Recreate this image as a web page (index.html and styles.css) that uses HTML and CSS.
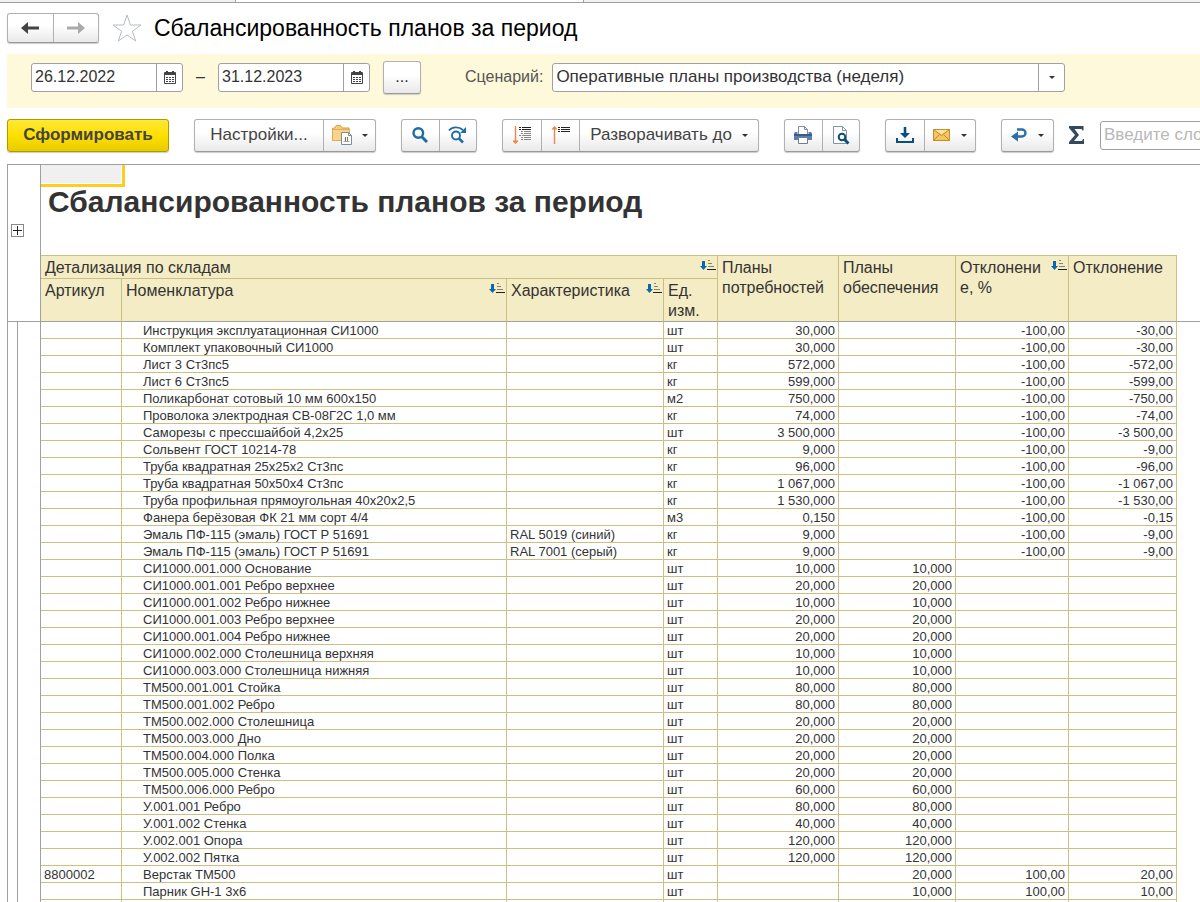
FILE: index.html
```html
<!DOCTYPE html>
<html lang="ru">
<head>
<meta charset="utf-8">
<title>Сбалансированность планов за период</title>
<link rel="stylesheet" href="styles.css">
</head>
<body>
<svg width="0" height="0" class="defs" aria-hidden="true">
  <symbol id="sort" viewBox="0 0 16 12">
    <path d="M2 1h3v5h2L3.500 10 0 6h2z" fill="#0d67b0"/>
    <path d="M8 .5h2M8 3.500h4M8 6.500h6" stroke="#888275"/>
    <path d="M7 9.500h9" stroke="#222"/>
  </symbol>
  <symbol id="cal" viewBox="0 0 12 13">
    <path d="M1 1h10a1 1 0 0 1 1 1v10a1 1 0 0 1-1 1H1a1 1 0 0 1-1-1V2a1 1 0 0 1 1-1z" fill="#444"/>
    <path d="M2 0h2v3H2zM8 0h2v3H8z" fill="#444"/>
    <path d="M1 4h10v8H1z" fill="#fff"/>
    <path d="M2 6h2v1H2zm3 0h2v1H5zm3 0h2v1H8zM2 8h2v1H2zm3 0h2v1H5zm3 0h2v1H8zM2 10h2v1H2zm3 0h2v1H5zm3 0h2v1H8z" fill="#444"/>
  </symbol>
</svg>
<div class="app">
  <div class="tabs"><span class="tab first"></span><span class="tab active"></span><span class="tab rest"></span></div>
  <header class="title-bar">
    <div class="group nav">
      <button class="btn" aria-label="Назад"><svg width="18" height="12" viewBox="0 0 18 12"><path d="M7 0v4.500h11v3H7V12L0 6z" fill="#444"/></svg></button>
      <button class="btn" aria-label="Вперёд"><svg width="18" height="12" viewBox="0 0 18 12"><path d="M11 0v4.500H0v3h11V12l7-6z" fill="#aaa"/></svg></button>
    </div>
    <button class="star" aria-label="В избранное"><svg width="30" height="28" viewBox="0 0 30 28"><path d="M15 1l3.400 10H29l-8.600 6.300L23.700 27 15 21 6.300 27l3.300-9.700L1 11h10.600z" fill="#fff" stroke="#b5bcc5"/></svg></button>
    <h1>Сбалансированность планов за период</h1>
  </header>

  <section class="filters">
    <div class="field date"><input type="text" value="26.12.2022" aria-label="Начало периода"><button aria-label="Выбрать дату начала"><svg width="12" height="13"><use href="#cal"/></svg></button></div>
    <span class="dash">–</span>
    <div class="field date"><input type="text" value="31.12.2023" aria-label="Конец периода"><button aria-label="Выбрать дату конца"><svg width="12" height="13"><use href="#cal"/></svg></button></div>
    <button class="solo more">...</button>
    <label for="scenario">Сценарий:</label>
    <div class="field scenario">
      <select id="scenario"><option>Оперативные планы производства (неделя)</option></select>
      <span class="drop"><i class="caret"></i></span>
    </div>
  </section>

  <div class="toolbar">
    <button class="primary">Сформировать</button>
    <div class="group">
      <button class="btn settings">Настройки...</button>
      <button class="btn wide" aria-label="Варианты отчёта">
        <svg width="21" height="20" viewBox="0 0 21 20"><path d="M.5 15.500V3.500l2-.5 2-2.500h4l1.500 2.500h7v3" fill="#f5cf7c" stroke="#d39a3c"/><path d="M.5 4.500h17v11H.5z" fill="#f7d488" stroke="#e0ac55"/><path d="M9.500 7.500h7l3 3v9h-10z" fill="#fff" stroke="#7c8da0"/><path d="M16.500 7.500v3h3" fill="none" stroke="#7c8da0"/><path d="M13.500 16v-4" stroke="#e33"/><path d="M15.500 16v-4" stroke="#3a3"/><path d="M11.500 16.500h6" stroke="#8ac"/></svg>
        <i class="caret"></i>
      </button>
    </div>
    <div class="group pair">
      <button class="btn" aria-label="Найти"><svg width="16" height="16" viewBox="0 0 16 16" fill="none" stroke="#1f6ba5"><circle cx="6.300" cy="6" r="4.800" stroke-width="2.400"/><path d="M10 10l5 5" stroke-width="3"/></svg></button>
      <button class="btn" aria-label="Найти далее"><svg width="19" height="18" viewBox="0 0 19 18" fill="none" stroke="#1f6ba5"><path d="M1 4.500C4 .5 11 .5 15 4" stroke-width="1.800"/><path d="M18 1v6h-6z" fill="#1f6ba5" stroke="none"/><circle cx="8" cy="9.500" r="4" stroke-width="1.900"/><path d="M11 12.500l4 4" stroke-width="2.500"/></svg></button>
    </div>
    <div class="group">
      <button class="btn" aria-label="Развернуть группы"><svg width="20" height="18" viewBox="0 0 20 18"><path d="M3.500 0v16" stroke="#f4824b" stroke-width="1.400"/><path d="M1 14.500h5v1L3.500 18 1 15.500z" fill="#f4824b"/><path d="M7 1.500h2m1 0h9M7 3.500h2m1 0h9" stroke="#222"/><path d="M9 5.500h2m1 0h7M9 7.500h2m1 0h7M7 9.500h2m1 0h9M9 11.500h2m1 0h7M9 13.500h2m1 0h7" stroke="#888"/></svg></button>
      <button class="btn" aria-label="Свернуть группы"><svg width="20" height="18" viewBox="0 0 20 18"><path d="M3.500 2v16" stroke="#f4824b" stroke-width="1.400"/><path d="M1 3.500h5v-1L3.500 0 1 2.500z" fill="#f4824b"/><path d="M7 1.500h2m1 0h9M7 3.500h2m1 0h9M7 5.500h2m1 0h9" stroke="#222"/></svg></button>
      <button class="btn expand">Разворачивать до <i class="caret"></i></button>
    </div>
    <div class="group pair">
      <button class="btn" aria-label="Печать"><svg width="18" height="18" viewBox="0 0 18 18"><path d="M4.500 8V.5h6l3 3V8" fill="#fff" stroke="#7c8da0"/><path d="M10.500.5v3h3" fill="none" stroke="#7c8da0"/><path d="M1 6h2.500v2h11V6H17l1 1.500v6.500H0V7.500z" fill="#5c7fab"/><path d="M0 9h18" stroke="#2d4f7c" stroke-width="1.500"/><path d="M4.500 11.500h9v6h-9z" fill="#fff" stroke="#6d7f95"/></svg></button>
      <button class="btn" aria-label="Предварительный просмотр"><svg width="18" height="19" viewBox="0 0 18 19"><path d="M1.500.5h9l4 4v13h-13z" fill="#fff" stroke="#8694a5"/><path d="M10.500.5v4h4" fill="none" stroke="#8694a5"/><circle cx="10" cy="11" r="3.300" fill="#fff" stroke="#0b4c7a" stroke-width="2"/><path d="M12.500 13.500l4 4" stroke="#0b4c7a" stroke-width="2.800"/></svg></button>
    </div>
    <div class="group">
      <button class="btn" aria-label="Сохранить"><svg width="18" height="16" viewBox="0 0 18 16"><path d="M7.700 0h2.600v6H14l-5 5-5-5h3.700z" fill="#0b4f80"/><path d="M1 11v4h16v-4" fill="none" stroke="#0b4f80" stroke-width="2"/></svg></button>
      <button class="btn wide mail" aria-label="Отправить"><svg width="17" height="12" viewBox="0 0 17 12"><path d="M.5.5h16v11H.5z" fill="#f5c65e" stroke="#c88a2c"/><path d="M2 1l6.500 4.500L15 1z" fill="#fbe3a4"/><path d="M.5.5l8 6 8-6M.5 11.500l6-6m10 6l-6-6" fill="none" stroke="#c88a2c"/></svg><i class="caret"></i></button>
    </div>
    <button class="solo undo" aria-label="Вернуть"><svg width="16" height="14" viewBox="0 0 16 14"><path d="M6 1.500h5a3.500 3.500 0 0 1 0 7H6" fill="none" stroke="#2a6fa8" stroke-width="2.400"/><path d="M7 3.500v10L0 8.500z" fill="#2a6fa8"/></svg><i class="caret"></i></button>
    <button class="sum" aria-label="Сумма"><svg width="15" height="18" viewBox="0 0 15 18"><path d="M0 0h14.500v4.500h-1L12.500 3H5.500L10 9l-5 6h8l1-2h1v5H0v-2l6-7-6-7z" fill="#34495e"/></svg></button>
    <input class="search" type="text" placeholder="Введите слово для фильтра" aria-label="Фильтр">
  </div>

  <main class="sheet">
    <div class="gutter">
      <div class="gutter-head"><button aria-label="Развернуть"><svg width="13" height="13" viewBox="0 0 13 13"><rect x=".5" y=".5" width="12" height="12" fill="#fff" stroke="#888"/><path d="M2 6.500h9M6.500 2v9" stroke="#222"/></svg></button></div>
      <div class="gutter-body"></div>
    </div>
    <div class="report">
      <div class="cell-cursor"></div>
      <h2>Сбалансированность планов за период</h2>
      <table>
        <colgroup><col class="c-art"><col class="c-name"><col class="c-char"><col class="c-unit"><col class="c-need"><col class="c-sup"><col class="c-pct"><col class="c-dev"><col></colgroup>
        <thead>
          <tr class="top"><th colspan="4"><div>Детализация по складам<svg width="16" height="12"><use href="#sort"/></svg></div></th><th rowspan="2">Планы потребностей</th><th rowspan="2">Планы обеспечения</th><th rowspan="2"><div><span>Отклонени<br>е, %</span><svg width="16" height="12"><use href="#sort"/></svg></div></th><th rowspan="2">Отклонение</th><td rowspan="2" class="rest"></td></tr>
          <tr class="sub"><th>Артикул</th><th><div>Номенклатура<svg width="16" height="12"><use href="#sort"/></svg></div></th><th><div>Характеристика<svg width="16" height="12"><use href="#sort"/></svg></div></th><th>Ед. изм.</th></tr>
        </thead>
        <tbody>
          <tr><td></td><td>Инструкция эксплуатационная СИ1000</td><td></td><td>шт</td><td>30,000</td><td></td><td>-100,00</td><td>-30,00</td></tr>
          <tr><td></td><td>Комплект упаковочный СИ1000</td><td></td><td>шт</td><td>30,000</td><td></td><td>-100,00</td><td>-30,00</td></tr>
          <tr><td></td><td>Лист 3 Ст3пс5</td><td></td><td>кг</td><td>572,000</td><td></td><td>-100,00</td><td>-572,00</td></tr>
          <tr><td></td><td>Лист 6 Ст3пс5</td><td></td><td>кг</td><td>599,000</td><td></td><td>-100,00</td><td>-599,00</td></tr>
          <tr><td></td><td>Поликарбонат сотовый 10 мм 600х150</td><td></td><td>м2</td><td>750,000</td><td></td><td>-100,00</td><td>-750,00</td></tr>
          <tr><td></td><td>Проволока электродная СВ-08Г2С 1,0 мм</td><td></td><td>кг</td><td>74,000</td><td></td><td>-100,00</td><td>-74,00</td></tr>
          <tr><td></td><td>Саморезы с прессшайбой 4,2х25</td><td></td><td>шт</td><td>3 500,000</td><td></td><td>-100,00</td><td>-3 500,00</td></tr>
          <tr><td></td><td>Сольвент ГОСТ 10214-78</td><td></td><td>кг</td><td>9,000</td><td></td><td>-100,00</td><td>-9,00</td></tr>
          <tr><td></td><td>Труба квадратная 25х25х2 Ст3пс</td><td></td><td>кг</td><td>96,000</td><td></td><td>-100,00</td><td>-96,00</td></tr>
          <tr><td></td><td>Труба квадратная 50х50х4 Ст3пс</td><td></td><td>кг</td><td>1 067,000</td><td></td><td>-100,00</td><td>-1 067,00</td></tr>
          <tr><td></td><td>Труба профильная прямоугольная 40х20х2,5</td><td></td><td>кг</td><td>1 530,000</td><td></td><td>-100,00</td><td>-1 530,00</td></tr>
          <tr><td></td><td>Фанера берёзовая ФК 21 мм сорт 4/4</td><td></td><td>м3</td><td>0,150</td><td></td><td>-100,00</td><td>-0,15</td></tr>
          <tr><td></td><td>Эмаль ПФ-115 (эмаль) ГОСТ Р 51691</td><td>RAL 5019 (синий)</td><td>кг</td><td>9,000</td><td></td><td>-100,00</td><td>-9,00</td></tr>
          <tr><td></td><td>Эмаль ПФ-115 (эмаль) ГОСТ Р 51691</td><td>RAL 7001 (серый)</td><td>кг</td><td>9,000</td><td></td><td>-100,00</td><td>-9,00</td></tr>
          <tr><td></td><td>СИ1000.001.000 Основание</td><td></td><td>шт</td><td>10,000</td><td>10,000</td><td></td><td></td></tr>
          <tr><td></td><td>СИ1000.001.001 Ребро верхнее</td><td></td><td>шт</td><td>20,000</td><td>20,000</td><td></td><td></td></tr>
          <tr><td></td><td>СИ1000.001.002 Ребро нижнее</td><td></td><td>шт</td><td>10,000</td><td>10,000</td><td></td><td></td></tr>
          <tr><td></td><td>СИ1000.001.003 Ребро верхнее</td><td></td><td>шт</td><td>20,000</td><td>20,000</td><td></td><td></td></tr>
          <tr><td></td><td>СИ1000.001.004 Ребро нижнее</td><td></td><td>шт</td><td>20,000</td><td>20,000</td><td></td><td></td></tr>
          <tr><td></td><td>СИ1000.002.000 Столешница верхняя</td><td></td><td>шт</td><td>10,000</td><td>10,000</td><td></td><td></td></tr>
          <tr><td></td><td>СИ1000.003.000 Столешница нижняя</td><td></td><td>шт</td><td>10,000</td><td>10,000</td><td></td><td></td></tr>
          <tr><td></td><td>ТМ500.001.001 Стойка</td><td></td><td>шт</td><td>80,000</td><td>80,000</td><td></td><td></td></tr>
          <tr><td></td><td>ТМ500.001.002 Ребро</td><td></td><td>шт</td><td>80,000</td><td>80,000</td><td></td><td></td></tr>
          <tr><td></td><td>ТМ500.002.000 Столешница</td><td></td><td>шт</td><td>20,000</td><td>20,000</td><td></td><td></td></tr>
          <tr><td></td><td>ТМ500.003.000 Дно</td><td></td><td>шт</td><td>20,000</td><td>20,000</td><td></td><td></td></tr>
          <tr><td></td><td>ТМ500.004.000 Полка</td><td></td><td>шт</td><td>20,000</td><td>20,000</td><td></td><td></td></tr>
          <tr><td></td><td>ТМ500.005.000 Стенка</td><td></td><td>шт</td><td>20,000</td><td>20,000</td><td></td><td></td></tr>
          <tr><td></td><td>ТМ500.006.000 Ребро</td><td></td><td>шт</td><td>60,000</td><td>60,000</td><td></td><td></td></tr>
          <tr><td></td><td>У.001.001 Ребро</td><td></td><td>шт</td><td>80,000</td><td>80,000</td><td></td><td></td></tr>
          <tr><td></td><td>У.001.002 Стенка</td><td></td><td>шт</td><td>40,000</td><td>40,000</td><td></td><td></td></tr>
          <tr><td></td><td>У.002.001 Опора</td><td></td><td>шт</td><td>120,000</td><td>120,000</td><td></td><td></td></tr>
          <tr><td></td><td>У.002.002 Пятка</td><td></td><td>шт</td><td>120,000</td><td>120,000</td><td></td><td></td></tr>
          <tr><td>8800002</td><td>Верстак ТМ500</td><td></td><td>шт</td><td></td><td>20,000</td><td>100,00</td><td>20,00</td></tr>
          <tr><td></td><td>Парник GH-1 3х6</td><td></td><td>шт</td><td></td><td>10,000</td><td>100,00</td><td>10,00</td></tr>
          <tr><td></td><td></td><td></td><td></td><td></td><td></td><td></td><td></td></tr>
        </tbody>
      </table>
    </div>
  </main>
</div>
</body>
</html>
```
FILE: styles.css
```css
* { box-sizing: border-box; }
body { margin: 0; background: #fff; color: #333; font: 16px/20px "Liberation Sans", Arial, sans-serif; }
button, input, select { font: inherit; color: inherit; margin: 0; padding: 0; }
button { border: 0; background: none; display: flex; align-items: center; justify-content: center; }
svg { display: block; flex: none; }
.defs { position: absolute; }
.app { height: 100vh; overflow: hidden; display: flex; flex-direction: column; }

.tabs { display: flex; flex: none; height: 3px; border-bottom: 1px solid #a0a0a0; background: #f0f0f0; }
.tab.first { width: 235px; }
.tab.active { width: 349px; background: #fff; border: solid #a0a0a0; border-width: 0 1px; }

.title-bar { display: flex; flex: none; align-items: center; height: 51px; padding: 0 0 2px 7px; }
.title-bar h1 { margin: 0 0 0 12px; font-size: 23px; line-height: 28px; font-weight: 400; color: #000; white-space: nowrap; }
.star { margin-left: 13px; }

.group { display: flex; flex: none; height: 33px; border: 1px solid #b0b0b0; border-bottom-color: #999; border-radius: 3px; background: linear-gradient(#fff 40%, #e9e9e9); box-shadow: 0 1px 1px #ccc; }
.btn { width: 38px; color: #444; }
.btn + .btn { border-left: 1px solid #b0b0b0; }
.nav { height: 30px; width: 92px; }
.nav .btn { flex: 1; }
.btn.wide { width: 52px; gap: 9px; }
.btn.mail { width: 51px; gap: 11px; }
.btn.settings { width: 128px; font-size: 17px; }
.btn.expand { width: 179px; gap: 10px; font-size: 17px; }
.pair { width: 76px; }
.pair .btn { flex: 1; }
.caret { width: 0; height: 0; border: 3px solid transparent; border-top-color: #333; border-bottom: 0; }

.filters { display: flex; flex: none; align-items: center; height: 54px; margin-left: 7px; padding: 0 0 8px 24px; background: #fff9db; }
.field { display: flex; height: 29px; border: 1px solid #a0a0a0; border-radius: 3px; background: #fff; overflow: hidden; }
.field input, .field select { flex: 1; min-width: 0; border: 0; outline: 0; background: none; padding: 0 3px; }
.field button, .drop { width: 26px; flex: none; border-left: 1px solid #a0a0a0; }
.date { width: 152px; }
.dash { width: 35px; text-align: center; }
.solo { height: 33px; border: 1px solid #b0b0b0; border-bottom-color: #999; border-radius: 3px; background: linear-gradient(#fff 40%, #e9e9e9); box-shadow: 0 1px 1px #ccc; }
.more { width: 38px; margin-left: 13px; }
.filters label { margin: 0 9px 0 44px; color: #555; }
.scenario { width: 513px; }
.scenario select { appearance: none; font-size: 17px; }
.drop { display: flex; align-items: center; justify-content: center; pointer-events: none; }

.toolbar { display: flex; flex: none; align-items: center; height: 56px; padding: 0 0 2px 7px; gap: 25px; }
.primary { width: 162px; height: 33px; flex: none; border: 1px solid #ab9a00; border-radius: 3px; background: linear-gradient(#ffe838, #ffdf00 50%, #e8cb00); box-shadow: 0 1px 1px #ccc; font-size: 17px; font-weight: 700; color: #444; }
.undo { width: 53px; flex: none; gap: 11px; }
.sum { margin: 0 -9px 0 -10px; flex: none; }
.search { width: 240px; height: 29px; flex: none; border: 1px solid #a0a0a0; border-radius: 3px; padding: 0 3px; font-size: 17px; }
.search::placeholder { color: #b8b8b8; opacity: 1; }

.sheet { display: flex; flex: 1; min-height: 0; margin-left: 7px; border: solid #a0a0a0; border-width: 1px 0 0 1px; }
.gutter { display: flex; flex: none; flex-direction: column; width: 33px; border-right: 1px solid #a0a0a0; }
.gutter-head { flex: none; height: 157px; padding: 59px 0 0 3px; border-bottom: 1px solid #a0a0a0; }
.gutter-body { flex: 1; width: 10px; border-right: 1px solid #a0a0a0; }
.report { position: relative; flex: 1; min-width: 0; }
.cell-cursor { position: absolute; top: 0; left: 0; width: 84px; height: 22px; border: solid #fc2; border-width: 0 3px 3px 0; background: #f0f0f0; box-shadow: inset -1px -1px #fff; }
.report h2 { margin: 0; height: 90px; padding: 19px 0 0 7px; font-size: 30px; line-height: 36px; white-space: nowrap; }

table { width: 100%; table-layout: fixed; border-collapse: separate; border-spacing: 0; font-size: 13px; line-height: 15px; }
.c-art { width: 81px; }
.c-name { width: 385px; }
.c-char { width: 157px; }
.c-unit { width: 54px; }
.c-need { width: 121px; }
.c-sup { width: 117px; }
.c-pct { width: 113px; }
.c-dev { width: 108px; }
th { padding: 2px 1px 0 4px; border: solid #ccbf82; border-width: 0 1px 1px 0; background: #f4ecc5; font-size: 16px; line-height: 20px; font-weight: 400; text-align: left; vertical-align: top; }
th div { display: flex; justify-content: space-between; }
th svg { margin-top: 2px; }
.top th { border-top: 1px solid #ccbf82; }
.top { height: 24px; }
.sub { height: 43px; }
.sub th, th[rowspan], .rest { border-bottom-color: #a0a0a0; }
thead .rest { padding: 0; border-bottom: 1px solid #a0a0a0; }
tbody td { height: 17px; padding: 1px 3px 0; border: solid #ccbf82; border-width: 0 1px 1px 0; white-space: nowrap; }
tbody td:nth-child(2) { padding-left: 21px; }
tbody td:nth-child(n+5) { text-align: right; }
```
